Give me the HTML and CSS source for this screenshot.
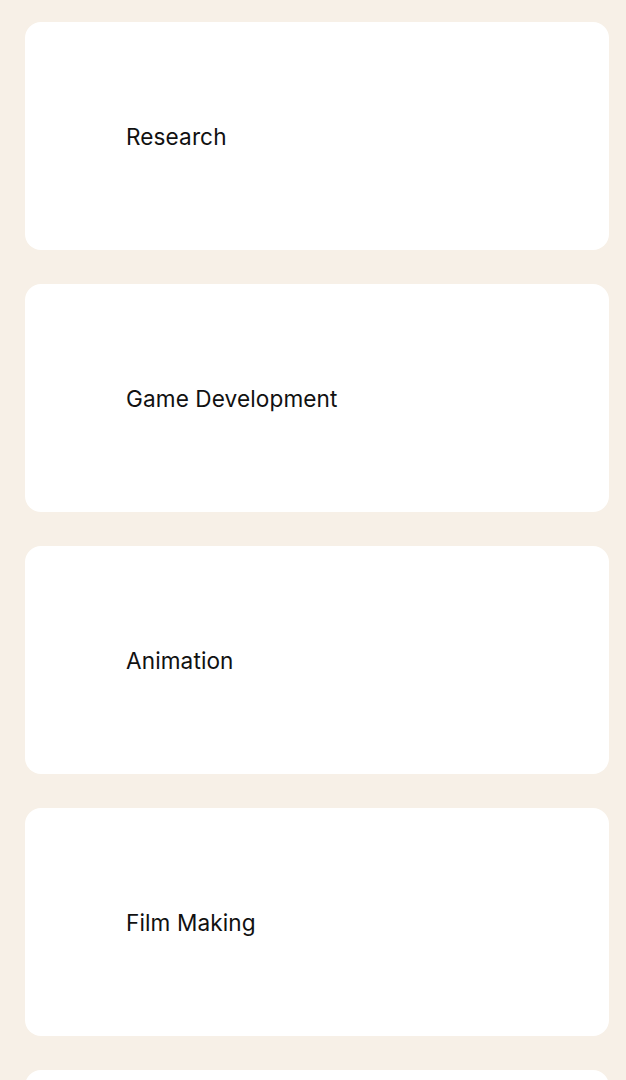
FILE: index.html
```html
<!DOCTYPE html>
<html>
<head>
<meta charset="utf-8">
<link rel="stylesheet" href="styles.css">
</head>
<body>
<main class="list">
  <div class="card"><span class="label">Research</span></div>
  <div class="card"><span class="label">Game Development</span></div>
  <div class="card"><span class="label">Animation</span></div>
  <div class="card"><span class="label">Film Making</span></div>
  <div class="card"></div>
</main>
</body>
</html>
```
FILE: styles.css
```css
html, body {
  margin: 0;
  padding: 0;
  background: #f7f0e7;
}
body {
  font-family: Inter, "Noto Sans", sans-serif;
  overflow: hidden;
  height: 1080px;
}
.list {
  display: flex;
  flex-direction: column;
  gap: 34px;
  padding: 22px 17px 0 25px;
}
.card {
  background: #ffffff;
  border-radius: 16px;
  height: 228px;
  display: flex;
  align-items: center;
  padding-left: 101px;
  flex-shrink: 0;
}
.label {
  font-size: 22.6px;
  color: #111111;
  letter-spacing: 0.1px;
}
```
